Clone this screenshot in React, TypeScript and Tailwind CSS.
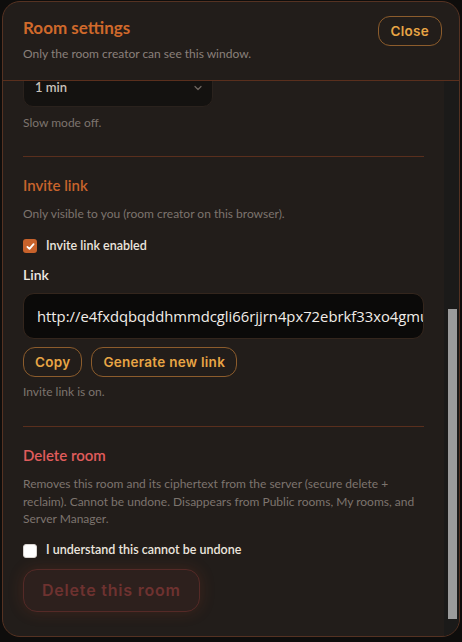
import React from "react";

const btnFont = { fontFamily: 'Inter, sans-serif' };

const Check = ({ on }: { on: boolean }) =>
  on ? (
    <span className="flex h-[14px] w-[14px] items-center justify-center rounded-[3px] bg-[#c8622b]">
      <svg viewBox="0 0 16 16" className="h-[11px] w-[11px]" fill="none" stroke="#fff" strokeWidth="2.6" strokeLinecap="round" strokeLinejoin="round">
        <path d="M3.5 8.5l3 3 6-7" />
      </svg>
    </span>
  ) : (
    <span className="h-[14px] w-[14px] rounded-[3px] border border-[#d8d4d0] bg-white" />
  );

const App = () => {
  const scroller = React.useRef<HTMLDivElement>(null);

  React.useLayoutEffect(() => {
    const el = scroller.current;
    if (el) el.scrollTop = el.scrollHeight;
  }, []);

  return (
    <div className="h-[642px] w-[462px] bg-[#0e0d0c] px-[2px] pt-px" style={{ fontFamily: 'Lato, "Noto Sans", sans-serif' }}>
      <div className="flex h-[636px] flex-col overflow-hidden rounded-[18px] border border-[#553222] bg-[#221d1a]">
        <div className="flex items-start justify-between border-b border-[#5a2f1d] pl-5 pr-[17px] pt-[13px] pb-[17px]">
          <div>
            <h2 className="text-[17px] font-bold leading-[26px] text-[#d0692b]">Room settings</h2>
            <p className="mt-[4px] text-[12px] leading-[18px] text-[#8a807a]">Only the room creator can see this window.</p>
          </div>
          <button className="mt-px h-[30px] rounded-[12px] border border-[#8c5c2c] px-[12px] text-[13.5px] font-semibold tracking-[0.02em] text-[#e8a545]" style={btnFont}>
            Close
          </button>
        </div>

        <div className="flex min-h-0 flex-1">
          <div ref={scroller} className="min-w-0 flex-1 overflow-hidden px-5 pb-[24px]">
            {/* general */}
            <section className="border-b border-[#5a2f1d] pt-[18px] pb-[25px]">
              <h3 className="text-[15px] font-semibold leading-[22px] text-[#c8642c]">Room name</h3>
              <p className="mt-[9px] text-[12px] leading-[18px] text-[#7d746e]">Shown to everyone who joins.</p>
              <div className="mt-[10px] h-[40px] rounded-[10px] border border-[#3a2a20] bg-[#0b0a09] px-[13px] text-[15px] leading-[38px] text-[#f0ebe6]">Night owls</div>
            </section>

            <section className="border-b border-[#5a2f1d] pt-[18px] pb-[25px]">
              <h3 className="text-[15px] font-semibold leading-[22px] text-[#c8642c]">Visibility</h3>
              <p className="mt-[9px] text-[12px] leading-[18px] text-[#7d746e]">Public rooms are listed for everyone.</p>
              <label className="mt-[13px] flex h-[18px] items-center gap-[9px] text-[12.5px] font-semibold text-[#ece5de]">
                <Check on={false} />
                Public room
              </label>
            </section>

            {/* slow mode */}
            <section className="border-b border-[#5a2f1d] pt-[18px] pb-[24px]">
              <h3 className="text-[15px] font-semibold leading-[22px] text-[#c8642c]">Slow mode</h3>
              <p className="mt-[9px] text-[12px] leading-[18px] text-[#7d746e]">Limit how often each member can post.</p>
              <div className="mt-[9px] flex h-[38px] w-[190px] items-center justify-between rounded-[10px] border border-[#2a221d] bg-[#141210] pl-[11px] pr-[8px] text-[13px] font-semibold text-[#c9c1b9]">
                1 min
                <svg viewBox="0 0 16 16" className="h-[12px] w-[12px]" fill="none" stroke="#6f6862" strokeWidth="1.6" strokeLinecap="round" strokeLinejoin="round">
                  <path d="M4 6l4 4 4-4" />
                </svg>
              </div>
              <p className="mt-[7px] text-[12px] leading-[18px] text-[#7d746e]">Slow mode off.</p>
            </section>

            {/* invite link */}
            <section className="border-b border-[#5a2f1d] pt-[17px] pb-[25px]">
              <h3 className="text-[15px] font-semibold leading-[22px] text-[#c8642c]">Invite link</h3>
              <p className="mt-[9px] text-[12px] leading-[18px] text-[#7d746e]">Only visible to you (room creator on this browser).</p>
              <label className="mt-[14px] flex h-[18px] items-center gap-[9px] text-[12.5px] font-semibold text-[#ece5de]">
                <Check on />
                Invite link enabled
              </label>
              <div className="mt-[10px] text-[14px] font-semibold leading-[20px] text-[#efe8e1]">Link</div>
              <div
                className="mt-[8px] h-[46px] overflow-hidden whitespace-nowrap rounded-[11px] border border-[#34261d] bg-[#0b0a09] pl-[13px] pr-[2px] text-[14.8px] leading-[44px] text-[#f2ede8]"
                style={{ fontFamily: '"Open Sans", sans-serif' }}
              >
                http://e4fxdqbqddhmmdcgli66rjjrn4px72ebrkf33xo4gmuxqplaid.onion/#/join/8d2f
              </div>
              <div className="mt-[8px] flex gap-[9px]">
                <button className="h-[30px] rounded-[12px] border border-[#8c5c2c] px-[11px] text-[13.5px] font-semibold tracking-[0.02em] text-[#e8a545]" style={btnFont}>
                  Copy
                </button>
                <button className="h-[30px] rounded-[12px] border border-[#8c5c2c] px-[11px] text-[13.5px] font-semibold tracking-[0.02em] text-[#e8a545]" style={btnFont}>
                  Generate new link
                </button>
              </div>
              <p className="mt-[6px] text-[12px] leading-[18px] text-[#7d746e]">Invite link is on.</p>
            </section>

            {/* delete */}
            <section className="pt-[17px]">
              <h3 className="text-[15px] font-semibold leading-[22px] text-[#e05c5c]">Delete room</h3>
              <p className="mt-[9px] text-[12px] leading-[17.5px] text-[#7d746e]">
                Removes this room and its ciphertext from the server (secure delete + reclaim). Cannot be undone. Disappears from Public rooms, My rooms, and Server Manager.
              </p>
              <label className="mt-[14px] flex h-[18px] items-center gap-[9px] text-[12.5px] font-semibold text-[#ece5de]">
                <Check on={false} />
                I understand this cannot be undone
              </label>
              <button
                className="mt-[9px] h-[43px] rounded-[14px] border border-[#552a27] bg-[#2d201d] px-[18px] text-[16px] font-semibold tracking-[0.05em] text-[#6e3230] shadow-[0_0_16px_rgba(190,70,40,0.18)]"
                style={btnFont}
              >
                Delete this room
              </button>
            </section>
          </div>

          {/* scrollbar */}
          <div className="flex w-[15px] flex-col justify-end bg-[#1b1a19] pb-[17px] pl-[4px] pr-[2px]">
            <div className="h-[310px] bg-[#9b9b9b]" />
          </div>
        </div>
      </div>
    </div>
  );
};

export default App;
